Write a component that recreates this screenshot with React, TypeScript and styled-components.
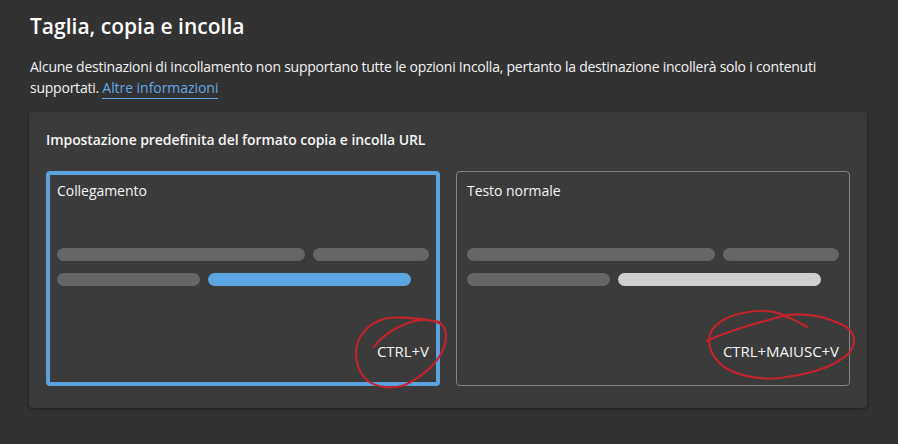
import React from "react";
import styled, { createGlobalStyle } from "styled-components";

const GlobalStyle = createGlobalStyle`
  html, body {
    margin: 0;
    padding: 0;
    background: #323232;
    overflow: hidden;
  }
  body {
    font-family: "Open Sans", "Noto Sans", "Liberation Sans", sans-serif;
    color: #ffffff;
  }
`;

const Page = styled.div`
  position: relative;
  width: 898px;
  height: 444px;
  box-sizing: border-box;
  padding: 12px 31px 0 29px;
`;

const Title = styled.h1`
  margin: 0 0 0 1px;
  font-size: 21px;
  line-height: 28px;
  font-weight: 600;
  letter-spacing: 0;
`;

const Intro = styled.p`
  margin: 16px 0 0 1px;
  font-size: 14px;
  line-height: 21px;
  letter-spacing: -0.235px;
  color: #f2f2f2;
`;

const MoreLink = styled.a`
  color: #62a8e5;
  border-bottom: 1px solid #62a8e5;
  padding-bottom: 1px;
  letter-spacing: -0.05px;
`;

const Card = styled.section`
  margin-top: 14px;
  height: 296px;
  box-sizing: border-box;
  padding: 18px 17px 0;
  background: #3b3b3b;
  border-radius: 4px;
  box-shadow: 0 1px 3px rgba(0, 0, 0, 0.4);
`;

const CardTitle = styled.h2`
  margin: 0;
  font-size: 14px;
  line-height: 20px;
  font-weight: 600;
  letter-spacing: -0.07px;
  color: #f5f5f5;
`;

const Options = styled.div`
  display: grid;
  grid-template-columns: 394px 394px;
  column-gap: 16px;
  margin-top: 21px;
`;

const Option = styled.div<{ $selected?: boolean }>`
  display: flex;
  flex-direction: column;
  height: 215px;
  box-sizing: border-box;
  padding: ${(p) => (p.$selected ? "6px 7px 21px 7px" : "9px 10px 24px 10px")};
  border: ${(p) => (p.$selected ? "4px solid #5ba3df" : "1px solid #858585")};
  border-radius: 4px;
`;

const OptionLabel = styled.div`
  font-size: 14px;
  line-height: 20px;
  letter-spacing: -0.05px;
  color: #f5f5f5;
`;

const Preview = styled.div`
  display: flex;
  flex-direction: column;
  gap: 12px;
  margin-top: 47px;
`;

const PreviewRow = styled.div`
  display: flex;
  gap: 8px;
`;

const Bar = styled.div<{ $width: number; $color?: string }>`
  width: ${(p) => p.$width}px;
  height: 13px;
  border-radius: 7px;
  background: ${(p) => p.$color ?? "#666666"};
`;

const Shortcut = styled.div`
  margin-top: auto;
  text-align: right;
  font-size: 15px;
  line-height: 20px;
  letter-spacing: -0.05px;
  color: #f5f5f5;
`;

const Scribbles = styled.svg`
  position: absolute;
  left: 0;
  top: 0;
  pointer-events: none;
`;

const Ink = styled.path`
  fill: none;
  stroke: #c4232b;
  stroke-width: 2.1;
  stroke-linecap: round;
  stroke-linejoin: round;
`;

type OptionData = {
  label: string;
  shortcut: string;
  accent: string;
  selected?: boolean;
};

const options: OptionData[] = [
  { label: "Collegamento", shortcut: "CTRL+V", accent: "#5ba6e2", selected: true },
  { label: "Testo normale", shortcut: "CTRL+MAIUSC+V", accent: "#cfcfcf" },
];

export default function App() {
  return (
    <Page>
      <GlobalStyle />
      <Title>Taglia, copia e incolla</Title>
      <Intro>
        Alcune destinazioni di incollamento non supportano tutte le opzioni Incolla, pertanto la
        destinazione incollerà solo i contenuti
        <br />
        supportati. <MoreLink>Altre informazioni</MoreLink>
      </Intro>
      <Card>
        <CardTitle>Impostazione predefinita del formato copia e incolla URL</CardTitle>
        <Options>
          {options.map((o) => (
            <Option key={o.label} $selected={o.selected}>
              <OptionLabel>{o.label}</OptionLabel>
              <Preview>
                <PreviewRow>
                  <Bar $width={248} />
                  <Bar $width={116} />
                </PreviewRow>
                <PreviewRow>
                  <Bar $width={143} />
                  <Bar $width={203} $color={o.accent} />
                </PreviewRow>
              </Preview>
              <Shortcut>{o.shortcut}</Shortcut>
            </Option>
          ))}
        </Options>
      </Card>
      <Scribbles width="898" height="444" viewBox="0 0 898 444">
        <Ink d="M374 347 C382 336 396 327 411 322 C424 318 436 320 442 325 C448 331 447 343 441 354 C434 366 420 378 405 385 C393 389 378 388 368 381 C358 373 354 358 357 345 C360 333 370 323 384 319 C396 316 420 318 440 322" />
        <Ink d="M707 341 C730 330 760 322 787 315 C805 313 825 316 843 325 C855 331 857 342 850 352 C838 365 812 374 780 378 C760 380 738 376 724 367 C712 358 707 345 710 334 C716 320 735 313 757 311 C770 310 780 313 787 317 C795 320 802 324 807 327" />
      </Scribbles>
    </Page>
  );
}
